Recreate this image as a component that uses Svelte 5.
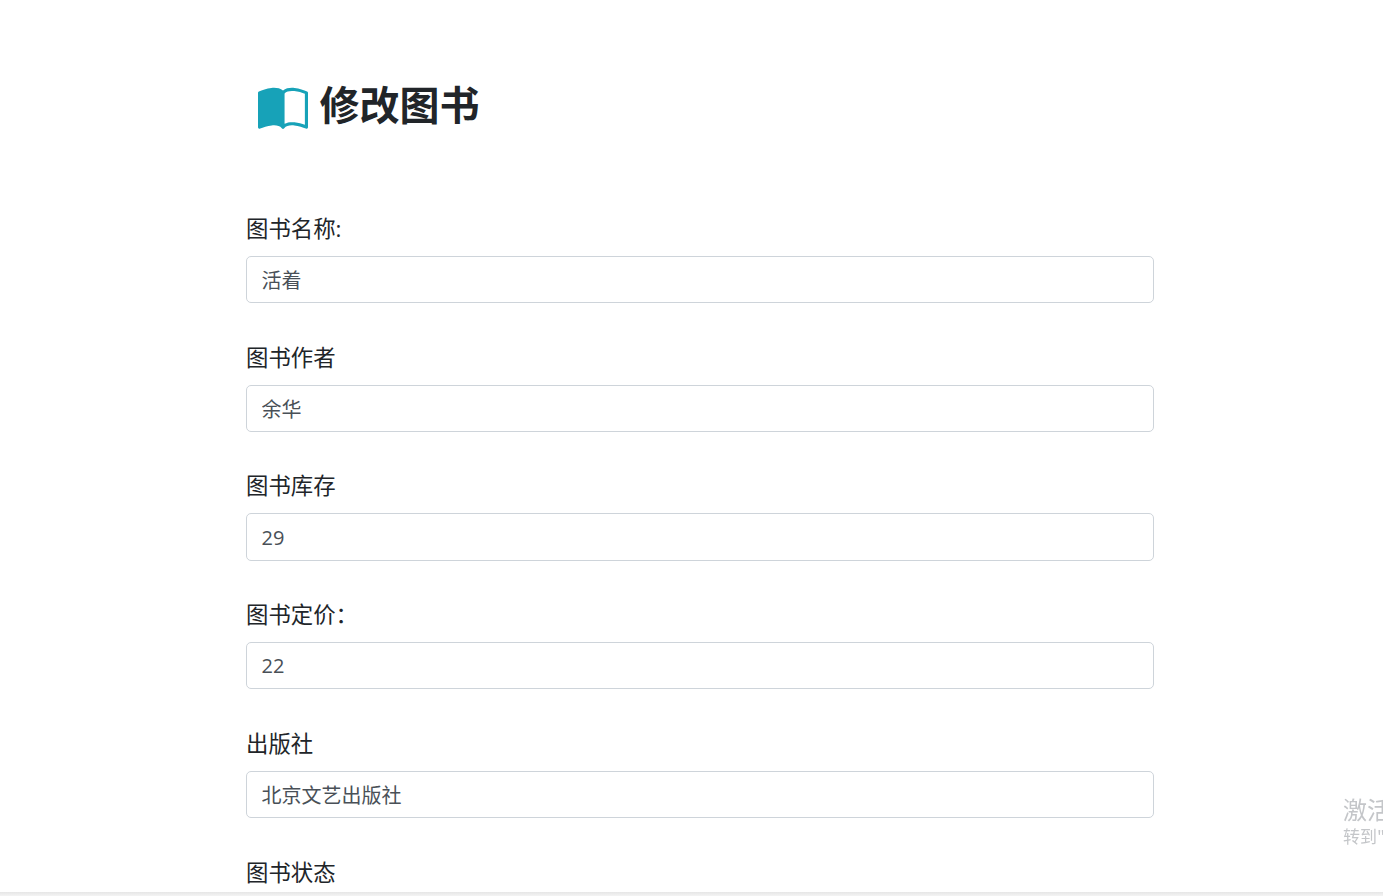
<script>
  const fields = [
    { label: '图书名称:', value: '活着' },
    { label: '图书作者', value: '余华' },
    { label: '图书库存', value: '29' },
    { label: '图书定价：', value: '22' },
    { label: '出版社', value: '北京文艺出版社' }
  ];
</script>

<div class="page">
  <h1 class="title">
    <svg class="book" viewBox="0 0 16 16" fill="currentColor" aria-hidden="true">
      <path d="M8.5 2.687c.654-.689 1.782-.886 3.112-.752 1.234.124 2.503.523 3.388.893v9.923c-.918-.35-2.107-.692-3.287-.81-1.094-.111-2.278-.039-3.213.492V2.687zM8 1.783C7.015.936 5.587.81 4.287.94c-1.514.153-3.042.672-3.994 1.105A.5.5 0 0 0 0 2.5v11a.5.5 0 0 0 .707.455c.882-.4 2.303-.881 3.68-1.02 1.409-.142 2.59.087 3.223.877a.5.5 0 0 0 .78 0c.633-.79 1.814-1.019 3.222-.877 1.378.139 2.8.62 3.681 1.02A.5.5 0 0 0 16 13.5v-11a.5.5 0 0 0-.293-.455c-.952-.433-2.48-.952-3.994-1.105C10.413.809 8.985.936 8 1.783z"/>
    </svg>
    <span>修改图书</span>
  </h1>

  <form class="form">
    {#each fields as f}
      <div class="group">
        <label class="label" for={f.label}>{f.label}</label>
        <input class="input" id={f.label} value={f.value} />
      </div>
    {/each}
    <div class="group">
      <span class="label">图书状态</span>
    </div>
  </form>
</div>

<div class="watermark">
  <div class="wm-big">激活 Windows</div>
  <div class="wm-small">转到"设置"以激活 Windows。</div>
</div>
<div class="bottom-edge"></div>

<style>
  :global(html), :global(body) {
    margin: 0;
    height: 100%;
    overflow: hidden;
    background: #fff;
  }
  .page {
    width: 908px;
    margin-left: 246px;
    color: #212529;
    font-family: "Open Sans", "Noto Sans CJK SC", sans-serif;
  }
  .title {
    display: flex;
    align-items: center;
    gap: 11.5px;
    margin: 0;
    padding: 71px 0 0 12px;
    font-size: 40px;
    line-height: 50px;
    font-weight: 700;
    font-family: "Noto Sans CJK SC", sans-serif;
  }
  .book {
    width: 50px;
    height: 50px;
    color: #17a2b8;
    margin-top: 14px;
  }
  .form {
    display: flex;
    flex-direction: column;
    gap: 37.4px;
    margin-top: 77px;
  }
  .group {
    display: flex;
    flex-direction: column;
    gap: 10.4px;
  }
  .label {
    font-size: 22.4px;
    line-height: 33.6px;
    font-family: "Open Sans", "Noto Sans CJK SC", sans-serif;
  }
  .input {
    box-sizing: border-box;
    width: 100%;
    height: 47.35px;
    padding: 6px 14.5px;
    border: 1px solid #ced4da;
    border-radius: 5px;
    font: inherit;
    font-size: 20px;
    line-height: 30px;
    color: #495057;
    background: #fff;
    outline: none;
  }
  .watermark {
    position: fixed;
    left: 1343px;
    top: 792px;
    width: 300px;
    color: #c4c6c9;
    font-family: "Noto Sans CJK SC", sans-serif;
  }
  .wm-big {
    font-size: 24px;
    line-height: 33px;
  }
  .wm-small {
    font-size: 17px;
    line-height: 22px;
  }
  .bottom-edge {
    position: fixed;
    left: 0;
    right: 0;
    bottom: 0;
    height: 4px;
    background: linear-gradient(#e6e6e6, #f4f4f4);
  }
</style>
